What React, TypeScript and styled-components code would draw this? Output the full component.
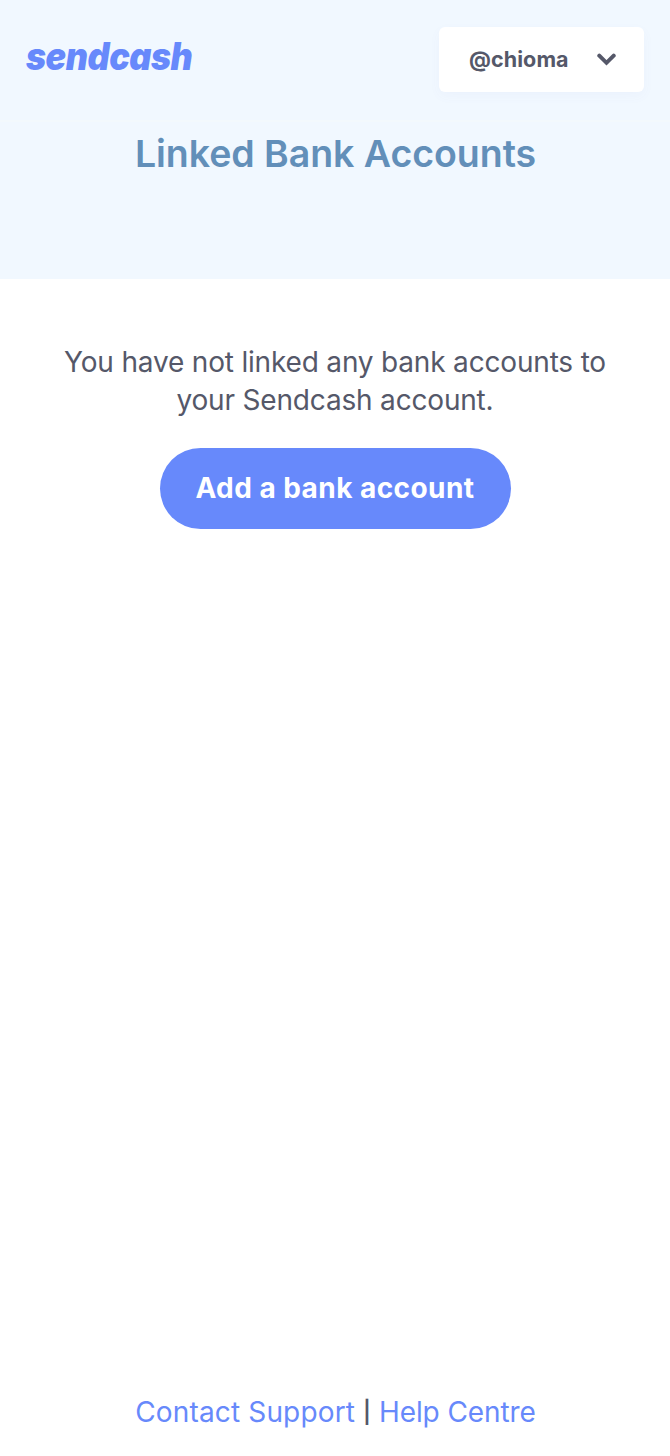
import React from "react";
import styled, { createGlobalStyle } from "styled-components";

const GlobalStyle = createGlobalStyle`
  * { box-sizing: border-box; }
  body {
    margin: 0;
    background: #ffffff;
    color: #555869;
    font-family: Inter, "Liberation Sans", sans-serif;
  }
`;

const Page = styled.div`
  min-height: 1456px;
  display: flex;
  flex-direction: column;
`;

const Hero = styled.header`
  height: 279px;
  background: #f1f8ff;
`;

const TopBar = styled.div`
  display: flex;
  justify-content: space-between;
  align-items: flex-start;
  height: 122px;
  padding: 27px 26px 0;
  border-bottom: 2px solid #f3f9fd;
`;

const Logo = styled.span`
  margin-top: 7px;
  font-size: 38px;
  line-height: 44px;
  font-weight: 900;
  font-style: italic;
  letter-spacing: -0.5px;
  transform: scaleX(0.9);
  transform-origin: left center;
  color: #6789fb;
`;

const AccountMenu = styled.button`
  display: flex;
  align-items: center;
  justify-content: space-between;
  width: 205px;
  height: 65px;
  padding: 0 28px 0 30px;
  border: 0;
  border-radius: 6px;
  background: #ffffff;
  box-shadow: 0 4px 12px rgba(103, 110, 200, 0.04);
  color: #555869;
  font-family: inherit;
  font-size: 21.5px;
  line-height: 28px;
  font-weight: 650;
`;

const AccountName = styled.span`
  padding-bottom: 2px;
  letter-spacing: 0.1px;
`;

const Title = styled.h1`
  margin: 8px 0 0;
  font-size: 37.5px;
  line-height: 48px;
  font-weight: 600;
  letter-spacing: -0.05px;
  text-align: center;
  text-indent: 1px;
  color: #628fb9;
`;

const Content = styled.main`
  flex: 1;
  display: flex;
  flex-direction: column;
  align-items: center;
  padding-top: 64px;
`;

const Message = styled.p`
  width: 570px;
  margin: 0;
  font-size: 28px;
  line-height: 38px;
  letter-spacing: -0.18px;
  text-align: center;
`;

const AddButton = styled.button`
  width: 351px;
  height: 81px;
  margin-top: 29px;
  padding: 0 0 1px;
  border: 0;
  border-radius: 41px;
  background: #6789fb;
  color: #ffffff;
  font-family: inherit;
  font-size: 28px;
  font-weight: 650;
  letter-spacing: 0.45px;
`;

const Footer = styled.footer`
  display: flex;
  justify-content: center;
  gap: 8px;
  padding: 0 0 26px 1px;
  font-size: 28px;
  line-height: 36px;
`;

const FooterLink = styled.a<{ $tracking: number }>`
  color: #6789fb;
  letter-spacing: ${(p) => p.$tracking}px;
`;

const Separator = styled.span`
  font-size: 22px;
  line-height: 36px;
  font-weight: 600;
`;

const Chevron = () => (
  <svg width="19" height="13" viewBox="0 0 19 13" fill="none" aria-hidden="true">
    <path d="M2.3 2.7 9.5 9.8 16.7 2.7" stroke="#555869" strokeWidth="4" strokeLinecap="round" />
  </svg>
);

export default function App() {
  return (
    <>
      <GlobalStyle />
      <Page>
        <Hero>
          <TopBar>
            <Logo>sendcash</Logo>
            <AccountMenu>
              <AccountName>@chioma</AccountName>
              <Chevron />
            </AccountMenu>
          </TopBar>
          <Title>Linked Bank Accounts</Title>
        </Hero>
        <Content>
          <Message>
            You have not linked any bank accounts to your Sendcash account.
          </Message>
          <AddButton>Add a bank account</AddButton>
        </Content>
        <Footer>
          <FooterLink $tracking={0.15}>Contact Support</FooterLink>
          <Separator>|</Separator>
          <FooterLink $tracking={-0.1}>Help Centre</FooterLink>
        </Footer>
      </Page>
    </>
  );
}
